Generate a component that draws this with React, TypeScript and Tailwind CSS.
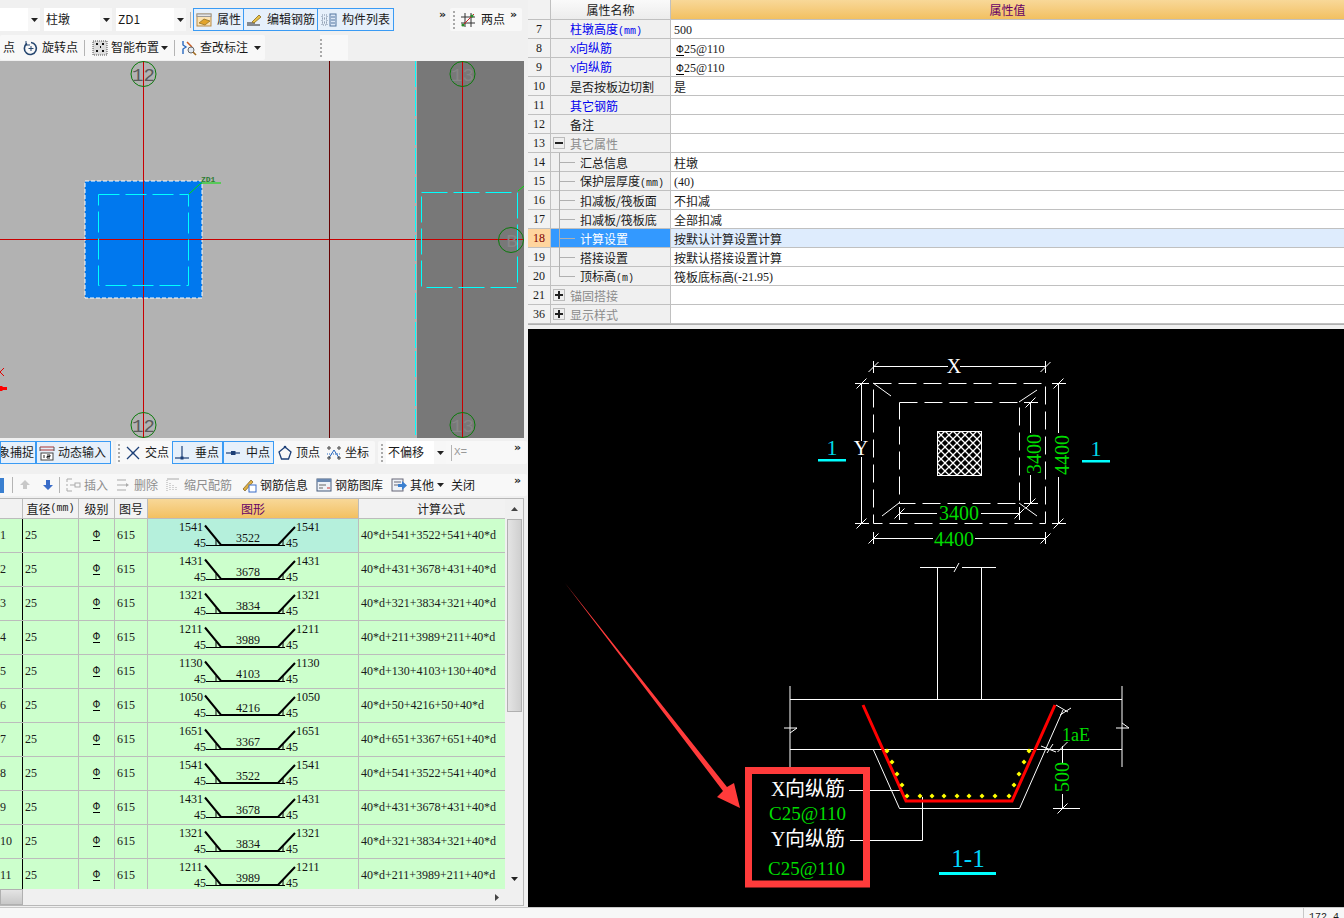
import React from "react";

const Mono = ({ children }: { children: React.ReactNode }) => (
  <span className="[font-family:'Liberation_Serif',serif] text-[12px]">{children}</span>
);

const Mm = ({ children }: { children: React.ReactNode }) => (
  <span className="[font-family:'Liberation_Mono',monospace] text-[10px]">{children}</span>
);

const Caret = () => (
  <svg width="7" height="4" viewBox="0 0 7 4" className="shrink-0"><path d="M0 0h7L3.5 4z" fill="#222" /></svg>
);

const Handle = () => (
  <div className="flex flex-col gap-[2px] w-[3px] shrink-0">
    {[0, 1, 2, 3, 4].map((i) => (
      <div key={i} className="w-[2px] h-[2px] bg-[#aaaaaa]" />
    ))}
  </div>
);

const Sep = ({ cls = "" }: { cls?: string }) => <div className={"w-px h-[16px] bg-[#b4b4b4] shrink-0 " + cls} />;

const More = ({ cls = "" }: { cls?: string }) => (
  <div className={"text-[11px] leading-none font-bold text-[#222] self-start mt-[1px] [font-family:'DejaVu_Sans',sans-serif] " + cls}>»</div>
);

const Rebar = () => (
  <span className="inline-block [font-family:'DejaVu_Sans',sans-serif] text-[10px] leading-[10px] border-b border-black h-[11px]">Φ</span>
);

const I = ({ children }: { children: React.ReactNode }) => (
  <svg width="16" height="16" viewBox="0 0 16 16" fill="none" className="shrink-0">{children}</svg>
);

const icons: Record<string, React.ReactNode> = {
  attr: <I><rect x="1" y="2" width="14" height="12" fill="#fbe3b4" stroke="#b98b46" /><rect x="1" y="2" width="14" height="2.5" fill="#e5e5e5" stroke="#999" /><path d="M3 11l5-4 6 2-5 4z" fill="#e2a42b" stroke="#8a6a1c" strokeWidth=".7" /></I>,
  edit: <I><path d="M1 11h8" stroke="#222" /><path d="M1 13h13" stroke="#222" /><path d="M6 10l7-7 2 2-7 6z" fill="#e8c34b" stroke="#8a6a1c" strokeWidth=".8" /></I>,
  list: <I><rect x="9" y="2" width="6" height="12" fill="#dbe7f6" stroke="#5577a0" /><path d="M10 5h4M10 8h4M10 11h4" stroke="#5577a0" /><path d="M1 3h5v3H1zM1 7h5v3H1zM1 11h5v2H1z" stroke="#7a8aa0" strokeDasharray="1 1" /></I>,
  two: <I><path d="M1 5h14M1 11h14M5 1v14M11 1v14" stroke="#333" /><path d="M2 14L14 2" stroke="#c22" /><circle cx="3" cy="13" r="1.6" fill="#2a8a2a" /><circle cx="12" cy="4" r="1.6" fill="#2a8a2a" /></I>,
  rot: <I><path d="M4 3.5a6 6 0 1 0 4-1" stroke="#24456f" strokeWidth="1.6" /><path d="M8 6v5M5.5 8.5h5" stroke="#24456f" /><path d="M3 1v4h4" stroke="#24456f" /></I>,
  smart: <I><rect x="1" y="1" width="14" height="14" fill="#ddd" stroke="#555" strokeDasharray="1 1" /><path d="M4 4h2M10 4h2M4 11h2M10 11h2M8 7h1" stroke="#111" strokeWidth="2" /></I>,
  check: <I><path d="M2 1v4l3 2-3 2v5" stroke="#2a6ac0" strokeWidth="1.4" /><path d="M6 2l5 5" stroke="#c85a20" strokeWidth="1.5" /><circle cx="10" cy="10" r="3" fill="#dfe9f4" stroke="#666" /><path d="M12 12l3 3" stroke="#a06a20" strokeWidth="1.6" /></I>,
  dyn: <I><path d="M1 2h14M1 5h14" stroke="#a33" /><path d="M1 2v4M15 2v4" stroke="#555" /><rect x="2" y="8" width="12" height="7" fill="#fff" stroke="#444" /><path d="M5 10v3M8 10h3v1.5H8V13h3" stroke="#222" /></I>,
  cross: <I><path d="M2 2l12 12M14 2L2 14" stroke="#1c3f77" strokeWidth="1.3" /><circle cx="8" cy="8" r="1.3" fill="#1c3f77" /></I>,
  perp: <I><path d="M1 13h14" stroke="#1c3f77" strokeWidth="1.2" /><path d="M8 1v12" stroke="#1c3f77" strokeWidth="1.2" /><rect x="6.5" y="11.5" width="3" height="3" fill="#1c3f77" /></I>,
  mid: <I><path d="M1 8h14" stroke="#1c3f77" strokeWidth="1.2" /><rect x="6" y="6" width="4.5" height="4" fill="#1c3f77" /></I>,
  apex: <I><path d="M8 2l6 5-2.5 7h-7L2 7z" stroke="#1c3f77" strokeWidth="1.3" /><circle cx="8" cy="2" r="1.3" fill="#1c3f77" /></I>,
  coord: <I><path d="M3 13L8 5l5 8" stroke="#2a6ac0" /><circle cx="3" cy="3" r="1.2" stroke="#333" /><circle cx="13" cy="3" r="1.2" stroke="#333" /><circle cx="3" cy="13" r="1.2" stroke="#333" /><circle cx="13" cy="13" r="1.2" stroke="#333" /><path d="M1 9h14" stroke="#2a6ac0" strokeDasharray="1 1" /></I>,
  up: <I><path d="M8 3l5 5h-3v4H6V8H3z" fill="#c8c8c8" /></I>,
  down: <I><path d="M8 13l5-5h-3V3H6v5H3z" fill="#3a6cc8" /></I>,
  ins: <I><path d="M2 2v3M2 7v2M2 11v3M2 2h5M2 14h5" stroke="#aaa" /><path d="M5 8h5" stroke="#aaa" /><rect x="10" y="6" width="5" height="4" stroke="#aaa" /></I>,
  del: <I><path d="M2 3h9M2 13h9M2 8h9" stroke="#aaa" /><path d="M11 6l3 2-3 2z" fill="#aaa" /></I>,
  scale: <I><path d="M2 3v11M5 6v8M8 8v6M11 10v4" stroke="#aaa" strokeDasharray="1 1" /><path d="M2 2h12" stroke="#aaa" /></I>,
  info: <I><path d="M2 12l8-9 2 2-8 9z" fill="#e0b040" stroke="#7a5a20" strokeWidth=".7" /><rect x="8" y="8" width="7" height="7" fill="#fff" stroke="#3a6cc8" /></I>,
  lib: <I><rect x="1" y="2" width="14" height="12" fill="#eef2f8" stroke="#455a7a" /><rect x="1" y="2" width="14" height="3" fill="#6b88b0" /><path d="M3 8h7M3 11h4" stroke="#666" /><path d="M11 11h3" stroke="#c33" /></I>,
  other: <I><rect x="1" y="2" width="11" height="12" fill="#eef2f8" stroke="#667" /><path d="M3 5h7M3 8h4" stroke="#667" /><path d="M7 7h4V4l5 4.5-5 4.5v-3H7z" fill="#3a7fd0" /></I>,
};

const Tool = ({ icon, label, cls = "", gray = false }: { icon?: string; label: string; cls?: string; gray?: boolean }) => (
  <div className={"flex items-center gap-[3px] h-full shrink-0 whitespace-nowrap " + (gray ? "text-[#8e8e8e] " : "text-[#1a1a1a] ") + cls}>
    {icon && icons[icon]}
    {label && <span className="-mt-[1px]">{label}</span>}
  </div>
);

const Select = ({ label, cls }: { label: string; cls: string }) => (
  <div className={"flex items-center h-[23px] bg-white shrink-0 " + cls}>
    <span className="flex-1 pl-[2px] -mt-[1px] whitespace-nowrap">{label}</span>
    <div className="w-[12px] h-full bg-[#f7f7f7] flex items-center justify-center"><Caret /></div>
  </div>
);

const Toolbar = ({ children, cls }: { children: React.ReactNode; cls: string }) => (
  <div className={"flex items-center bg-[#f8f8f8] rounded-[2px] " + cls}>{children}</div>
);

const dots = (pts: number[][]) => pts.map(([x, y]) => <path key={x + "-" + y} d={`M${x} ${y - 2.5}l2.5 2.5l-2.5 2.5l-2.5-2.5z`} fill="#ffff00" />);

const tick = (x: number, y: number) => `M${x - 5} ${y + 5}L${x + 5} ${y - 5}`;

const Canvas = () => (
  <svg viewBox="0 61 524 377" width="524" height="377" className="block shrink-0">
    <rect x="0" y="61" width="417" height="377" fill="#b2b2b2" />
    <rect x="417" y="61" width="107" height="377" fill="#787878" />
    <rect x="85" y="181" width="117" height="117" fill="#0078ee" />
    <rect x="85" y="181" width="117" height="117" fill="none" stroke="#fff" strokeDasharray="4 2" />
    <path d="M143.500 61V438M462.500 61V438M0 239.500H524" stroke="#c80000" />
    <path d="M329.500 61V438" stroke="#640000" />
    <path d="M415.500 61V438" stroke="#00ffff" strokeDasharray="26 3" />
    <rect x="98.500" y="194.500" width="90" height="91" fill="none" stroke="#00ffff" strokeDasharray="21 6" />
    <rect x="421.500" y="192.500" width="96" height="95" fill="none" stroke="#00ffff" strokeDasharray="26 6" />
    <path d="M189 194L201 183H221" stroke="#00e000" fill="none" />
    <path d="M518 191L524 186" stroke="#00e000" fill="none" />
    <text x="201" y="182" fontSize="8" fontWeight="700" fill="#2e7d32" className="[font-family:'Liberation_Mono',monospace]">ZD1</text>
    {[[143.5, 74], [143.5, 425]].map(([x, y]) => (
      <g key={y}>
        <circle cx={x} cy={y} r="12.500" fill="none" stroke="#0a7a0a" />
        <text x={x} y={y + 7} fontSize="19" textAnchor="middle" fill="#5a5a5a" className="[font-family:'Liberation_Mono',monospace]">12</text>
      </g>
    ))}
    {[[462.5, 74], [462.5, 425]].map(([x, y]) => (
      <g key={y}>
        <circle cx={x} cy={y} r="12.500" fill="none" stroke="#0a7a0a" />
        <text x={x} y={y + 7} fontSize="19" textAnchor="middle" fill="#868686" className="[font-family:'Liberation_Mono',monospace]">13</text>
      </g>
    ))}
    <circle cx="511" cy="240" r="12.500" fill="none" stroke="#0a7a0a" />
    <text x="512" y="247" fontSize="19" textAnchor="middle" fill="#868686" className="[font-family:'Liberation_Mono',monospace]">B</text>
    <path d="M4 368L0 372L4 376" stroke="#e00000" fill="none" />
    <path d="M0 386h2l1 1h4v3H3l-1 1H0z" fill="#ff0000" />
  </svg>
);

const Drawing = () => (
  <svg viewBox="528 329 816 578" width="816" height="578" className="block">
    <defs>
      <pattern id="hatch" width="8" height="8" patternUnits="userSpaceOnUse" x="937" y="431">
        <path d="M0 0L8 8M8 0L0 8" stroke="#fff" strokeWidth="1.300" />
      </pattern>
    </defs>
    <g stroke="#fff" fill="none">
      <rect x="873.500" y="383.500" width="172" height="140" strokeDasharray="18 7" />
      <rect x="899.500" y="402.500" width="120" height="101" strokeDasharray="18 7" />
      <rect x="937.500" y="431.500" width="44" height="44" fill="url(#hatch)" />
      <path d="M873 383L891 396M1019 402L1037 390M899 503L882 516M1019 503L1037 516" />
      <path d="M873.500 361V373M1045.500 361V373M873 366.500H948M960 366.500H1046" />
      <path d={tick(873.5, 367) + tick(1045.5, 367)} />
      <path d="M861.500 383V441M861.500 457V523M855 383.500H869M855 523.500H869" />
      <path d={tick(861.5, 383.5) + tick(861.5, 523.5)} />
      <path d="M1058.500 383V433M1058.500 477V523M1052 383.500H1066M1052 523.500H1066" />
      <path d={tick(1058.5, 383.5) + tick(1058.5, 523.5)} />
      <path d="M1030.500 402V433M1030.500 475V503M1024 402.500H1038M1024 503.500H1038" />
      <path d={tick(1030.5, 402.5) + tick(1030.5, 503.5)} />
      <path d="M899 513.500H937M981 513.500H1019M899.500 507V520M1019.500 507V520" />
      <path d={tick(899.5, 513.5) + tick(1019.5, 513.5)} />
      <path d="M873 538.500H933M975 538.500H1046M873.500 532V544M1045.500 532V544" />
      <path d={tick(873.5, 538.5) + tick(1045.5, 538.5)} />
      <path d="M937.500 567V699M981.500 567V699M920 567.500H955M962 567.500H996M954 572L959 563" />
      <path d="M790 686V767M1122 686V767M790 699.500H1122M790 749.500H1122" />
      <path d="M784 728H797L790 733M1116 728H1129L1122 723" />
      <path d="M873 749L899.500 808.500H1019.500L1063 710" />
      <path d="M1056 705L1068 712M1060 715L1071 708" />
      <path d="M1041 746L1056 752M1047 753L1053 744" />
      <path d="M849 790.500H866M870 790.500H902M850 840.500H922.500V797" />
      <path d="M1062.500 746V763M1062.500 794V808M1053 808.500H1080" />
      <path d={tick(1062.5, 808.5) + tick(1062.5, 747)} />
    </g>
    <path d="M863 705L906 801H1012L1055 705" stroke="#ff0000" strokeWidth="3" fill="none" />
    {dots([[887, 751], [892, 762], [897, 774], [902, 785], [907, 796], [920, 796], [932, 796], [944, 796], [957, 796], [969, 796], [982, 796], [995, 796], [1009, 796], [1014, 785], [1019, 774], [1024, 762], [1029, 751]])}
    <g className="[font-family:'Liberation_Serif',serif]">
      <text x="954" y="373" fontSize="20" textAnchor="middle" fill="#fff">X</text>
      <text x="861" y="455" fontSize="20" textAnchor="middle" fill="#fff">Y</text>
      <text x="959" y="520" fontSize="20" textAnchor="middle" fill="#00dc00">3400</text>
      <text x="954" y="546" fontSize="20" textAnchor="middle" fill="#00dc00">4400</text>
      <text transform="translate(1041 454) rotate(-90)" fontSize="20" textAnchor="middle" fill="#00dc00">3400</text>
      <text transform="translate(1069 455) rotate(-90)" fontSize="20" textAnchor="middle" fill="#00dc00">4400</text>
      <text x="832" y="455" fontSize="22" textAnchor="middle" fill="#00d8e8">1</text>
      <text x="1096" y="456" fontSize="22" textAnchor="middle" fill="#00d8e8">1</text>
      <text x="1062" y="741" fontSize="18" fill="#00dc00">1aE</text>
      <text transform="translate(1069 777) rotate(-90)" fontSize="20" textAnchor="middle" fill="#00dc00">500</text>
      <text x="968" y="867" fontSize="25" textAnchor="middle" fill="#00d8ff">1-1</text>
      <text x="807.500" y="820" fontSize="19" textAnchor="middle" fill="#00dc00">C25@110</text>
      <text x="806.500" y="875" fontSize="19" textAnchor="middle" fill="#00dc00">C25@110</text>
      <text x="771" y="796" fontSize="20" fill="#fff">X</text>
      <text x="771" y="846" fontSize="20" fill="#fff">Y</text>
    </g>
    <text x="785" y="796" fontSize="20" fill="#fff" className="[font-family:'Noto_Sans_CJK_SC',sans-serif]">向纵筋</text>
    <text x="785" y="846" fontSize="20" fill="#fff" className="[font-family:'Noto_Sans_CJK_SC',sans-serif]">向纵筋</text>
    <rect x="818" y="459" width="28" height="2.500" fill="#00ffff" />
    <rect x="1082" y="460" width="28" height="2.500" fill="#00ffff" />
    <rect x="939" y="872" width="57" height="3" fill="#00ffff" />
    <rect x="748.500" y="770.500" width="118" height="113.500" fill="none" stroke="#ff3b3b" strokeWidth="7" />
    <path d="M565 583L727 787L734 783L740 808L717 797L723 791L565 583z" fill="#ff3b3b" />
  </svg>
);

type Prop = { n: string; name?: React.ReactNode; val?: React.ReactNode; blue?: boolean; child?: boolean; last?: boolean; box?: "-" | "+"; sel?: boolean };

const props: Prop[] = [
  { n: "7", name: <>柱墩高度<Mm>(mm)</Mm></>, val: <Mono>500</Mono>, blue: true },
  { n: "8", name: <><Mm>X</Mm>向纵筋</>, val: <><span className="ml-[2px]"><Rebar /></span><Mono>25@110</Mono></>, blue: true },
  { n: "9", name: <><Mm>Y</Mm>向纵筋</>, val: <><span className="ml-[2px]"><Rebar /></span><Mono>25@110</Mono></>, blue: true },
  { n: "10", name: "是否按板边切割", val: "是" },
  { n: "11", name: "其它钢筋", blue: true },
  { n: "12", name: "备注" },
  { n: "13", name: "其它属性", box: "-" },
  { n: "14", name: "汇总信息", val: "柱墩", child: true },
  { n: "15", name: <>保护层厚度<Mm>(mm)</Mm></>, val: <Mono>(40)</Mono>, child: true },
  { n: "16", name: "扣减板/筏板面", val: "不扣减", child: true },
  { n: "17", name: "扣减板/筏板底", val: "全部扣减", child: true },
  { n: "18", name: "计算设置", val: "按默认计算设置计算", child: true, sel: true },
  { n: "19", name: "搭接设置", val: "按默认搭接设置计算", child: true },
  { n: "20", name: <>顶标高<Mm>(m)</Mm></>, val: <>筏板底标高<Mono>(-21.95)</Mono></>, child: true, last: true },
  { n: "21", name: "锚固搭接", box: "+" },
  { n: "36", name: "显示样式", box: "+" },
];

const PropRow = ({ p }: { p: Prop }) => (
  <div className="flex h-[19px] border-b border-[#c0c0c0]">
    <div className={"w-[23px] shrink-0 flex items-center justify-center border-r border-[#c0c0c0] [font-family:'Liberation_Serif',serif] text-[12px] " + (p.sel ? "bg-[#ffd59e] text-[#800000]" : "bg-[#f2f2f2]")}>{p.n}</div>
    <div className={"w-[120px] shrink-0 relative flex items-center pt-[1px] border-r border-[#c0c0c0] whitespace-nowrap " + (p.child ? "pl-[29px] " : "pl-[19px] ") + (p.sel ? "bg-[#3399ff] text-white " : p.blue ? "text-[#0000ee] " : p.box ? "text-[#8c8c8c] " : "text-[#1a1a1a]")}>
      {p.child && <div className={"absolute left-[8px] top-0 w-px bg-[#b0b0b0] " + (p.last ? "h-[10px]" : "h-[19px]")} />}
      {p.child && <div className="absolute left-[8px] top-[9px] w-[16px] h-px bg-[#b0b0b0]" />}
      {p.box && (
        <div className="absolute left-[2px] top-[3px] w-[12px] h-[12px] border border-[#bbbbbb] bg-[#eeeeee] flex items-center justify-center">
          <div className="relative w-[8px] h-[8px]">
            <div className="absolute left-0 top-[3px] w-[8px] h-[2px] bg-[#222]" />
            {p.box === "+" && <div className="absolute left-[3px] top-0 w-[2px] h-[8px] bg-[#222]" />}
          </div>
        </div>
      )}
      <span>{p.name}</span>
    </div>
    <div className={"flex-1 flex items-center pt-[1px] pl-[3px] whitespace-nowrap " + (p.sel ? "bg-[#deecfd]" : "bg-white")}>{p.val}</div>
  </div>
);

const bars = [
  ["1", "1541", "3522", "40*d+541+3522+541+40*d"],
  ["2", "1431", "3678", "40*d+431+3678+431+40*d"],
  ["3", "1321", "3834", "40*d+321+3834+321+40*d"],
  ["4", "1211", "3989", "40*d+211+3989+211+40*d"],
  ["5", "1130", "4103", "40*d+130+4103+130+40*d"],
  ["6", "1050", "4216", "40*d+50+4216+50+40*d"],
  ["7", "1651", "3367", "40*d+651+3367+651+40*d"],
  ["8", "1541", "3522", "40*d+541+3522+541+40*d"],
  ["9", "1431", "3678", "40*d+431+3678+431+40*d"],
  ["10", "1321", "3834", "40*d+321+3834+321+40*d"],
  ["11", "1211", "3989", "40*d+211+3989+211+40*d"],
];

const Shape = ({ a, c }: { a: string; c: string }) => (
  <svg width="210" height="33" viewBox="0 0 210 33" className="block">
    <g className="[font-family:'Liberation_Serif',serif]" fontSize="12" fill="#111">
      <text x="31" y="12">{a}</text>
      <text x="148" y="12">{a}</text>
      <text x="46" y="28">45</text>
      <text x="138" y="28">45</text>
      <text x="88" y="23">{c}</text>
    </g>
    <path d="M57 6.500L73 26H130L147 8" stroke="#000" strokeWidth="2" fill="none" />
    <path d="M58 26.500H73M68 21V26M135 21V26M130 26.500H137" stroke="#000" fill="none" />
  </svg>
);

const Cell = ({ children, cls = "" }: { children?: React.ReactNode; cls?: string }) => (
  <div className={"h-full shrink-0 flex items-center border-r pb-[1px] " + cls}>{children}</div>
);

const BarRow = ({ r, i }: { r: string[]; i: number }) => (
  <div className="flex h-[34px] shrink-0 border-b border-[#bcbcbc] bg-[#ccffcc] [font-family:'Liberation_Serif',serif] text-[12px]">
    <Cell cls="w-[23px] border-black">{r[0]}</Cell>
    <Cell cls="w-[56px] pl-[2px] border-[#bcbcbc]">25</Cell>
    <Cell cls="w-[36px] justify-center border-[#bcbcbc]"><Rebar /></Cell>
    <Cell cls="w-[33px] pl-[2px] border-[#bcbcbc]">615</Cell>
    <Cell cls={"w-[211px] !pb-0 border-[#bcbcbc] " + (i === 0 ? "bg-[#b5f0dc]" : "")}><Shape a={r[1]} c={r[2]} /></Cell>
    <div className="flex-1 h-full flex items-center pl-[2px] pb-[1px] whitespace-nowrap">{r[3]}</div>
  </div>
);

const Head = ({ children, cls = "" }: { children?: React.ReactNode; cls?: string }) => (
  <div className={"h-full shrink-0 flex items-center justify-center border-r border-[#bcbcbc] whitespace-nowrap " + cls}>{children}</div>
);

export default function App() {
  return (
    <div className="w-[1344px] h-[918px] overflow-hidden flex flex-col bg-[#f0f0f0] text-[12px] leading-none text-[#1a1a1a] [font-family:'Noto_Sans_CJK_SC','Liberation_Sans',sans-serif]">
      <div className="flex flex-1 min-h-0">
        <div className="w-[527px] shrink-0 flex flex-col">
          {/* toolbar 1 */}
          <div className="h-[35px] pt-[8px] pb-[4px] flex items-center shrink-0">
            <Select label="" cls="w-[40px]" />
            <Select label="柱墩" cls="w-[68px] ml-[4px]" />
            <Select label="ZD1" cls="w-[70px] ml-[4px]" />
            <Sep cls="ml-[4px]" />
            <div className="ml-[2px] h-[23px] flex border border-[#3a9bf4] shrink-0">
              <Tool icon="attr" label="属性" cls="w-[50px] pl-[2px] gap-[5px] bg-[#e6f0fb] border-r border-[#3a9bf4]" />
              <Tool icon="edit" label="编辑钢筋" cls="w-[74px] pl-[2px] gap-[5px] bg-[#e6f0fb] border-r border-[#3a9bf4]" />
              <Tool icon="list" label="构件列表" cls="w-[75px] pl-[3px] gap-[5px] bg-[#e6f0fb]" />
            </div>
            <More cls="ml-[45px]" />
            <Toolbar cls="h-[23px] w-[72px] ml-[4px] pl-[3px] relative">
              <Handle />
              <Tool icon="two" label="两点" cls="ml-[4px] gap-[5px]" />
              <div className="absolute right-[5px] top-0"><More /></div>
            </Toolbar>
          </div>
          {/* toolbar 2 */}
          <div className="h-[26px] flex items-center shrink-0 pb-[1px]">
            <Toolbar cls="h-full w-[265px] pl-[3px]">
              <Tool label="点" />
              <Tool icon="rot" label="旋转点" cls="ml-[8px]" />
              <Sep cls="ml-[6px]" />
              <Tool icon="smart" label="智能布置" cls="ml-[7px]" />
              <div className="ml-[2px]"><Caret /></div>
              <Sep cls="ml-[6px]" />
              <Tool icon="check" label="查改标注" cls="ml-[6px]" />
              <div className="ml-[6px]"><Caret /></div>
            </Toolbar>
            <div className="ml-[55px] w-[28px] h-full bg-[#f8f8f8] flex items-center"><Handle /></div>
          </div>
          <Canvas />
          {/* toolbar 3 */}
          <div className="h-[29px] flex items-center shrink-0 py-[3px]">
            <Toolbar cls="h-full w-[113px]">
              <div className="w-[36px] h-[23px] border border-[#3a9bf4] bg-[#e6f0fb] flex items-center justify-end pr-[1px] shrink-0 whitespace-nowrap overflow-hidden"><span className="shrink-0 -mt-[1px]">象捕捉</span></div>
              <Tool icon="dyn" label="动态输入" cls="w-[75px] border border-[#3a9bf4] bg-[#e6f0fb] pl-[2px] !h-[23px]" />
            </Toolbar>
            <Toolbar cls="h-full w-[259px] ml-[3px] pl-[2px]">
              <Handle />
              <Tool icon="cross" label="交点" cls="ml-[4px] gap-[4px]" />
              <Tool icon="perp" label="垂点" cls="ml-[3px] w-[51px] !h-[23px] border border-[#3a9bf4] bg-[#e6f0fb] pl-[1px] gap-[5px]" />
              <Tool icon="mid" label="中点" cls="w-[51px] !h-[23px] border border-[#3a9bf4] bg-[#e6f0fb] pl-[1px] gap-[5px]" />
              <Tool icon="apex" label="顶点" cls="ml-[3px] gap-[3px]" />
              <Tool icon="coord" label="坐标" cls="ml-[6px]" />
            </Toolbar>
            <Toolbar cls="h-full flex-1 ml-[3px] pl-[3px] relative">
              <Handle />
              <Select label="不偏移" cls="w-[60px] ml-[2px]" />
              <Sep cls="ml-[5px]" />
              <span className="ml-[2px] text-[#999999] [font-family:'Liberation_Mono',monospace] text-[11px]">X=</span>
              <div className="absolute right-[6px] top-0"><More /></div>
            </Toolbar>
          </div>
          {/* toolbar 4 */}
          <div className="h-[31px] flex items-center shrink-0 pt-[7px] pb-[2px]">
            <Toolbar cls="h-full flex-1 relative">
              <div className="w-[4px] h-[15px] bg-[#3a7fd0]" />
              <Sep cls="ml-[8px]" />
              <Tool icon="up" label="" cls="ml-[4px]" />
              <Tool icon="down" label="" cls="ml-[7px]" />
              <Sep cls="ml-[3px]" />
              <Tool icon="ins" label="插入" cls="ml-[5px]" gray />
              <Tool icon="del" label="删除" cls="ml-[7px]" gray />
              <Tool icon="scale" label="缩尺配筋" cls="ml-[7px]" gray />
              <Tool icon="info" label="钢筋信息" cls="ml-[9px]" />
              <Tool icon="lib" label="钢筋图库" cls="ml-[8px]" />
              <Tool icon="other" label="其他" cls="ml-[8px]" />
              <div className="ml-[3px]"><Caret /></div>
              <span className="ml-[7px] -mt-[1px]">关闭</span>
              <div className="absolute right-[6px] top-0"><More /></div>
            </Toolbar>
          </div>
          {/* table */}
          <div className="w-[524px] h-[408px] border-y border-r border-[#b8b8b8] flex flex-col shrink-0 bg-white overflow-hidden">
            <div className="flex flex-1 min-h-0">
              <div className="w-[505px] shrink-0 flex flex-col overflow-hidden">
                <div className="flex h-[20px] shrink-0 border-b border-[#bcbcbc] bg-[#f2f2f2]">
                  <Head cls="w-[23px]" />
                  <Head cls="w-[56px]">直径<Mm>(mm)</Mm></Head>
                  <Head cls="w-[36px]">级别</Head>
                  <Head cls="w-[33px]">图号</Head>
                  <Head cls="w-[211px] bg-gradient-to-b from-[#f8d898] to-[#f2c060] text-[#660066]">图形</Head>
                  <Head cls="flex-1 !border-r-0 pl-[18px]">计算公式</Head>
                </div>
                {bars.map((r, i) => <BarRow key={r[0]} r={r} i={i} />)}
              </div>
              <div className="flex-1 bg-[#f0f0f0] flex flex-col items-center">
                <div className="h-[20px] flex items-center justify-center"><svg width="7" height="4" viewBox="0 0 7 4"><path d="M0 4h7L3.500 0z" fill="#444" /></svg></div>
                <div className="w-[15px] h-[193px] bg-gradient-to-r from-[#e4e4e4] to-[#cfcfcf] border border-[#b0b0b0]" />
                <div className="flex-1" />
                <div className="h-[20px] flex items-center justify-center"><Caret /></div>
              </div>
            </div>
            <div className="h-[16px] shrink-0 bg-[#f0f0f0] flex items-center">
              <div className="w-[23px] h-full bg-gradient-to-b from-[#e4e4e4] to-[#c8c8c8] border border-[#b0b0b0]" />
              <div className="flex-1" />
              <svg width="4" height="7" viewBox="0 0 4 7" className="mr-[24px]"><path d="M0 0v7l4-3.500z" fill="#444" /></svg>
            </div>
          </div>
        </div>
        {/* right */}
        <div className="flex-1 min-w-0 flex flex-col pl-px">
          <div className="h-[329px] shrink-0 flex flex-col">
            <div className="flex h-[20px] shrink-0 border-b border-[#c0c0c0]">
              <div className="w-[23px] shrink-0 bg-[#f2f2f2] border-r border-[#c0c0c0]" />
              <div className="w-[120px] shrink-0 bg-gradient-to-b from-[#fafafa] to-[#ececec] border-r border-[#c0c0c0] flex items-center justify-center">属性名称</div>
              <div className="flex-1 bg-gradient-to-b from-[#f8d898] to-[#f2c060] text-[#660066] flex items-center justify-center">属性值</div>
            </div>
            {props.map((p) => <PropRow key={p.n} p={p} />)}
            <div className="h-[1px] bg-[#b0b0b0] shrink-0" />
          </div>
          <div className="h-[578px] shrink-0 bg-black overflow-hidden">
            <Drawing />
          </div>
        </div>
      </div>
      <div className="h-[11px] shrink-0 bg-[#f7f7f7] border-t border-[#c8c8c8] flex overflow-hidden">
        <div className="w-[1304px] shrink-0 border-r border-[#c8c8c8]" />
        <div className="pl-[5px] pt-[5px] [font-family:'Liberation_Mono',monospace] text-[10px]">172.4</div>
      </div>
    </div>
  );
}
